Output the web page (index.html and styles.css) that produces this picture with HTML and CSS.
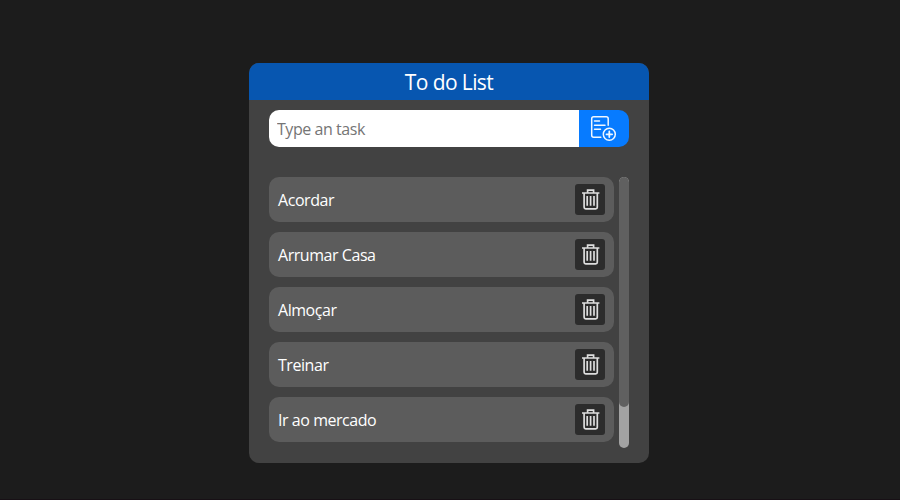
FILE: index.html
```html
<!DOCTYPE html>
<html lang="en">
<head>
<meta charset="utf-8">
<title>To do List</title>
<link rel="stylesheet" href="styles.css">
</head>
<body>
<svg class="sprite" aria-hidden="true">
  <symbol id="trash" viewBox="0 0 30 31">
    <path d="M7 9H24.4M12.6 8.5V6.2H18.6V8.5M9.1 9.5V23.2Q9.1 24.8 10.7 24.8H20.7Q22.3 24.8 22.3 23.2V9.5" fill="none" stroke="currentColor" stroke-width="1.7"/>
    <path d="M12.2 12V21.8M15.6 12V21.8M19 12V21.8" fill="none" stroke="currentColor" stroke-width="1.7"/>
  </symbol>
</svg>
<main class="card">
  <h1 class="title">To do List</h1>
  <form class="entry">
    <input class="field" type="text" placeholder="Type an task">
    <button class="add" type="button" aria-label="Add">
      <svg width="50" height="37" viewBox="0 0 50 37" fill="none" stroke="currentColor" stroke-width="1.5" stroke-linecap="round">
        <path d="M21.8 27.3H14.7Q12.7 27.3 12.7 25.3V8.8Q12.7 6.8 14.7 6.8H27.2Q29.2 6.8 29.2 8.8V15.3M15.5 11H20.5M15.5 15.2H26M15.5 19.3H21.5"/>
        <circle cx="30.3" cy="24.3" r="6"/>
        <path d="M30.3 21.5V27.1M27.5 24.3H33.1" stroke-width="1.8"/>
      </svg>
    </button>
  </form>
  <div class="tasks">
    <ul class="list">
      <li class="task"><span>Acordar</span><button class="remove" aria-label="Delete"><svg width="30" height="31"><use href="#trash"/></svg></button></li>
      <li class="task"><span>Arrumar Casa</span><button class="remove" aria-label="Delete"><svg width="30" height="31"><use href="#trash"/></svg></button></li>
      <li class="task"><span>Almoçar</span><button class="remove" aria-label="Delete"><svg width="30" height="31"><use href="#trash"/></svg></button></li>
      <li class="task"><span>Treinar</span><button class="remove" aria-label="Delete"><svg width="30" height="31"><use href="#trash"/></svg></button></li>
      <li class="task"><span>Ir ao mercado</span><button class="remove" aria-label="Delete"><svg width="30" height="31"><use href="#trash"/></svg></button></li>
    </ul>
    <div class="track"><div class="thumb"></div></div>
  </div>
</main>
</body>
</html>
```
FILE: styles.css
```css
* {
  box-sizing: border-box;
  margin: 0;
  padding: 0;
}

body {
  height: 500px;
  padding: 63px 0 0 249px;
  overflow: hidden;
  border-bottom: 1px solid #171015;
  background: #1c1c1c;
  color: #fff;
  font-family: "Open Sans", "Noto Sans", sans-serif;
  font-size: 16px;
  letter-spacing: -0.45px;
}

.sprite {
  display: none;
}

.card {
  width: 400px;
  height: 400px;
  border-radius: 10px;
  overflow: hidden;
  background: #424242;
}

.title {
  height: 37px;
  background: #0756b0;
  font-size: 21px;
  font-weight: 400;
  letter-spacing: -0.6px;
  line-height: 38px;
  text-align: center;
}

.entry {
  display: flex;
  height: 37px;
  margin: 10px 20px 30px;
  border-radius: 10px;
  overflow: hidden;
}

.field {
  width: 310px;
  padding: 1px 8px 0;
  border: 0;
  background: #fff;
  font: inherit;
  letter-spacing: inherit;
}

.field::placeholder {
  color: #757575;
}

.add {
  width: 50px;
  border: 0;
  background: #077bff;
  color: #f0f7ff;
}

svg {
  display: block;
}

.tasks {
  display: flex;
  gap: 5px;
  height: 271px;
  margin: 0 20px;
}

.list {
  display: flex;
  flex-direction: column;
  gap: 10px;
  width: 345px;
  list-style: none;
}

.task {
  display: flex;
  align-items: flex-start;
  justify-content: space-between;
  height: 45px;
  padding: 7px 9px;
  border-radius: 10px;
  background: #5c5c5c;
  line-height: 32px;
}

.remove {
  width: 30px;
  height: 31px;
  border: 0;
  border-radius: 3px;
  background: #2c2c2c;
  color: #dedede;
}

.track {
  width: 10px;
  border-radius: 5px;
  overflow: hidden;
  background: #a3a3a3;
}

.thumb {
  height: 230px;
  border-radius: 5px;
  background: #606060;
}
```
